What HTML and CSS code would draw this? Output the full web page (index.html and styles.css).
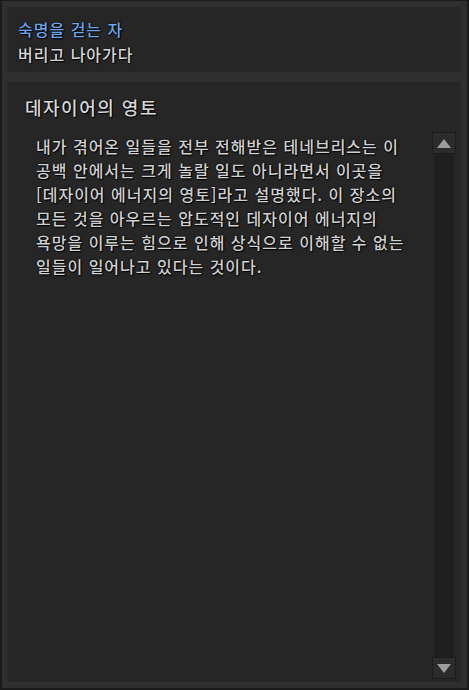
FILE: index.html
```html
<!DOCTYPE html>
<html lang="ko">
<head>
    <meta charset="UTF-8">
    <title>데자이어의 영토</title>
    <link rel="stylesheet" href="styles.css">
</head>
<body>
    <div class="window">
        <div class="header">
            <div class="quest">숙명을 걷는 자</div>
            <div class="step">버리고 나아가다</div>
        </div>
        <div class="panel">
            <h1 class="title">데자이어의 영토</h1>
            <div class="content">
                <p class="story">
                    내가 겪어온 일들을 전부 전해받은 테네브리스는 이<br>
                    공백 안에서는 크게 놀랄 일도 아니라면서 이곳을<br>
                    [데자이어 에너지의 영토]라고 설명했다. 이 장소의<br>
                    모든 것을 아우르는 압도적인 데자이어 에너지의<br>
                    욕망을 이루는 힘으로 인해 상식으로 이해할 수 없는<br>
                    일들이 일어나고 있다는 것이다.
                </p>
                <div class="scrollbar">
                    <div class="scroll-btn">
                        <svg width="14" height="9" viewBox="0 0 14 9"><polygon points="7,0 14,9 0,9" fill="#9c9c9c"/></svg>
                    </div>
                    <div class="track"></div>
                    <div class="scroll-btn">
                        <svg width="14" height="9" viewBox="0 0 14 9"><polygon points="0,0 14,0 7,9" fill="#9c9c9c"/></svg>
                    </div>
                </div>
            </div>
        </div>
    </div>
</body>
</html>
```

FILE: styles.css
```css
body {
    margin: 0;
    background-color: #1a1a1a;
    font-family: "Noto Sans CJK KR", "Noto Sans", sans-serif;
}
.window {
    width: 469px;
    height: 690px;
    box-sizing: border-box;
    border: 1px solid #1a1a1a;
    border-left-width: 2px;
    border-right-width: 2px;
    border-bottom-width: 2px;
    background-color: #2f2f2f;
    padding: 6px 6px 6px 5px;
    display: flex;
    flex-direction: column;
    gap: 10px;
}
.header {
    background-color: #262626;
    padding: 10px 11px 5px;
    height: 65px;
    box-sizing: border-box;
}
.quest,
.step {
    font-size: 16px;
    font-weight: 500;
    letter-spacing: 1px;
    line-height: 25px;
    text-shadow: 0 0 2px #000, 1px 1px 1px #000;
}
.quest {
    color: #6ea6ee;
}
.step {
    color: #d6d6d6;
}
.panel {
    flex: 1;
    background-color: #262626;
    padding: 13px 5px 3px 18px;
    display: flex;
    flex-direction: column;
}
.title {
    margin: 0 0 13px;
    font-size: 18px;
    letter-spacing: 1.5px;
    font-weight: 500;
    line-height: 24px;
    color: #d8d8d8;
    text-shadow: 0 0 2px #000, 1px 1px 1px #000;
}
.content {
    flex: 1;
    display: flex;
}
.story {
    flex: 1;
    margin: 0;
    padding: 2px 0 0 11px;
    font-size: 16px;
    font-weight: 500;
    letter-spacing: 1px;
    line-height: 24px;
    color: #d0d0d0;
    text-shadow: 0 0 2px #000, 1px 1px 1px #000;
    white-space: nowrap;
}
.scrollbar {
    width: 24px;
    display: flex;
    flex-direction: column;
    align-items: center;
}
.scroll-btn {
    width: 24px;
    height: 22px;
    box-sizing: border-box;
    border: 1px solid #1c1c1c;
    background-color: #2b2b2b;
    display: flex;
    align-items: center;
    justify-content: center;
}
.track {
    flex: 1;
    width: 20px;
    background-color: #1f1f1f;
}
```
